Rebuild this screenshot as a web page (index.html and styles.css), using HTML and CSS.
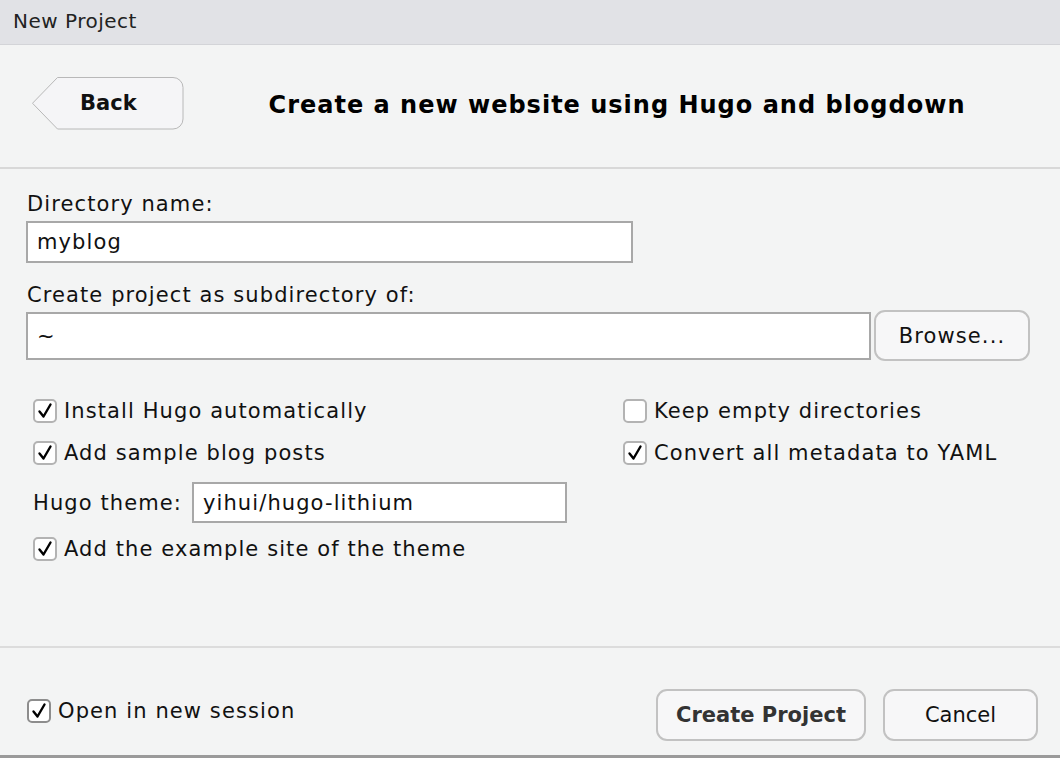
FILE: index.html
```html
<!DOCTYPE html>
<html>
<head>
<meta charset="utf-8">
<link rel="stylesheet" href="styles.css">
</head>
<body>
<div class="window">
  <div class="titlebar">New Project</div>
  <div class="header">
    <div class="back">
      <svg class="back-shape" width="152" height="53" viewBox="0 0 152 53"><path d="M25.5 0.5 H141 A10 10 0 0 1 151 10.5 V42 A10 10 0 0 1 141 52 H25.5 L0.5 26.25 Z" fill="#f5f5f7" stroke="#b8b8b8" stroke-width="1"/></svg>
      <span class="back-label">Back</span>
    </div>
    <div class="heading">Create a new website using Hugo and blogdown</div>
  </div>
  <div class="form">
    <div class="label">Directory name:</div>
    <div class="input input-name">myblog</div>
    <div class="label label-sub">Create project as subdirectory of:</div>
    <div class="dir-row">
      <div class="input input-dir">~</div>
      <div class="btn btn-browse">Browse...</div>
    </div>
    <div class="options">
      <div class="col">
        <div class="check-row"><span class="box"><svg class="tick" width="20" height="20" viewBox="0 0 20 20"><path d="M4.5 10.5 L8.5 15.5 L15.5 3.5"/></svg></span><span>Install Hugo automatically</span></div>
        <div class="check-row"><span class="box"><svg class="tick" width="20" height="20" viewBox="0 0 20 20"><path d="M4.5 10.5 L8.5 15.5 L15.5 3.5"/></svg></span><span>Add sample blog posts</span></div>
        <div class="theme-row"><span>Hugo theme:</span><div class="input input-theme">yihui/hugo-lithium</div></div>
        <div class="check-row"><span class="box"><svg class="tick" width="20" height="20" viewBox="0 0 20 20"><path d="M4.5 10.5 L8.5 15.5 L15.5 3.5"/></svg></span><span>Add the example site of the theme</span></div>
      </div>
      <div class="col">
        <div class="check-row"><span class="box"></span><span>Keep empty directories</span></div>
        <div class="check-row"><span class="box"><svg class="tick" width="20" height="20" viewBox="0 0 20 20"><path d="M4.5 10.5 L8.5 15.5 L15.5 3.5"/></svg></span><span>Convert all metadata to YAML</span></div>
      </div>
    </div>
  </div>
  <div class="footer">
    <div class="check-row session"><span class="box dark"><svg class="tick" width="20" height="20" viewBox="0 0 20 20"><path d="M4.5 10.5 L8.5 15.5 L15.5 3.5"/></svg></span><span>Open in new session</span></div>
    <div class="buttons">
      <div class="btn btn-create">Create Project</div>
      <div class="btn btn-cancel">Cancel</div>
    </div>
  </div>
</div>
</body>
</html>
```
FILE: styles.css
```css
html, body {
  margin: 0;
  padding: 0;
  background: #f3f4f4;
}
body {
  font-family: "DejaVu Sans", "Liberation Sans", sans-serif;
  font-size: 21px;
  letter-spacing: 1.1px;
  color: #111;
}
.window {
  width: 1060px;
  height: 758px;
  display: flex;
  flex-direction: column;
  box-sizing: border-box;
  border-bottom: 3px solid #9a9a9a;
}
.titlebar {
  height: 45px;
  box-sizing: border-box;
  background: #e1e2e6;
  border-bottom: 1px solid #d3d4d8;
  padding: 9px 0 0 13px;
  font-size: 20px;
  letter-spacing: 0.5px;
  color: #222;
}
.header {
  display: flex;
  align-items: center;
  padding-left: 32px;
  padding-bottom: 6px;
  border-bottom: 2px solid #d8d8d8;
  box-sizing: border-box;
  height: 124px;
}
.back {
  position: relative;
  width: 152px;
  height: 53px;
  display: flex;
  align-items: center;
  flex-shrink: 0;
}
.back-shape {
  position: absolute;
  left: 0;
  top: 0;
}
.back-label {
  position: relative;
  margin-left: 48px;
  font-weight: bold;
  font-size: 21px;
  letter-spacing: 0;
  color: #111;
}
.heading {
  flex: 1;
  text-align: center;
  padding-right: 10px;
  font-weight: bold;
  font-size: 24px;
  letter-spacing: 1px;
  color: #000;
  margin-top: 4px;
}
.form {
  padding: 23px 0 0 26px;
  height: 479px;
  box-sizing: border-box;
  border-bottom: 2px solid #dcdcdc;
}
.label {
  padding-left: 1px;
  line-height: 24px;
}
.label-sub {
  margin-top: 20px;
}
.input {
  background: #fff;
  border: 2px solid #a8a8a8;
  box-sizing: border-box;
  padding-left: 9px;
  display: flex;
  align-items: center;
}
.input-name {
  margin-top: 5px;
  width: 607px;
  height: 42px;
}
.dir-row {
  margin-top: 3px;
  display: flex;
  align-items: center;
  gap: 3px;
}
.input-dir {
  width: 845px;
  height: 48px;
}
.btn {
  background: #f7f7f8;
  border: 2px solid #c2c2c2;
  border-radius: 11px;
  box-sizing: border-box;
  display: flex;
  align-items: center;
  justify-content: center;
  color: #111;
}
.btn-browse {
  width: 156px;
  height: 51px;
}
.options {
  display: grid;
  grid-template-columns: 590px 1fr;
  padding: 37px 0 0 7px;
}
.col {
  display: flex;
  flex-direction: column;
}
.check-row {
  display: flex;
  align-items: center;
  height: 26px;
  margin-bottom: 16px;
  gap: 7px;
}
.box {
  width: 24px;
  height: 24px;
  box-sizing: border-box;
  border: 2px solid #b3b3b3;
  border-radius: 5px;
  background: #fff;
  display: flex;
  align-items: center;
  justify-content: center;
  flex-shrink: 0;
}
.tick {
  display: block;
  fill: none;
  stroke: #000;
  stroke-width: 2.4;
  stroke-linecap: round;
  stroke-linejoin: round;
}
.box.dark {
  border-color: #8d8d8d;
}
.theme-row {
  display: flex;
  align-items: center;
  gap: 10px;
  height: 41px;
  margin-top: 0;
  margin-bottom: 13px;
}
.input-theme {
  width: 375px;
  height: 41px;
}
.footer {
  flex: 1;
  display: flex;
  align-items: center;
  justify-content: space-between;
  padding: 26px 22px 0 27px;
}
.session {
  margin: 0;
  margin-bottom: 7px;
}
.buttons {
  display: flex;
  gap: 17px;
}
.btn-create {
  width: 210px;
  height: 52px;
  font-weight: bold;
  color: #333;
  font-size: 21px;
  letter-spacing: 0;
}
.btn-cancel {
  width: 155px;
  height: 52px;
  font-size: 21px;
  letter-spacing: 0;
}
```
